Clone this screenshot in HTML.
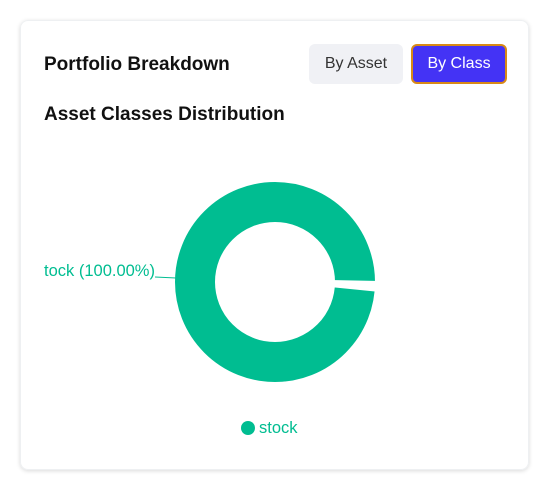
<!DOCTYPE html>
<html><head><style>
body{margin:0;width:550px;height:500px;background:#fff;font-family:"Liberation Sans",Arial,sans-serif;position:relative;overflow:hidden}
.card{position:absolute;left:20px;top:20px;width:509px;height:450px;border-radius:8px;box-shadow:0 1px 4px rgba(0,0,0,.15);border:1px solid #eef0f2;box-sizing:border-box}
.t{position:absolute;font-weight:bold;color:#111;font-size:19px}
.b{position:absolute;top:44px;height:40px;border-radius:6px;font-size:16px;line-height:40px;text-align:center;box-sizing:border-box}
</style></head><body>
<div class="card"></div>
<div class="t" style="left:44px;top:54px">Portfolio Breakdown</div>
<div class="t" style="left:44px;top:104px">Asset Classes Distribution</div>
<div class="b" style="left:309px;width:94px;background:#f0f1f5;color:#333">By Asset</div>
<div class="b" style="left:411px;width:96px;background:#4433f5;color:#fff;border:2px solid #d98a16;line-height:36px">By Class</div>
<svg width="550" height="500" style="position:absolute;left:0;top:0">
<circle cx="275" cy="282" r="80" fill="none" stroke="#00bd91" stroke-width="40"/>
<polygon points="330,280 380,281 380,292 330,287" fill="#fff"/>
<line x1="155" y1="277" x2="176" y2="278" stroke="#00bd91" stroke-width="1"/>
<text x="44" y="276" font-size="16.5" fill="#00bd91" font-family="Liberation Sans, Arial, sans-serif">tock (100.00%)</text>
<circle cx="248" cy="428" r="7" fill="#00bd91"/>
<text x="259" y="433" font-size="16.5" fill="#00bd91" font-family="Liberation Sans, Arial, sans-serif">stock</text>
</svg>
</body></html>
